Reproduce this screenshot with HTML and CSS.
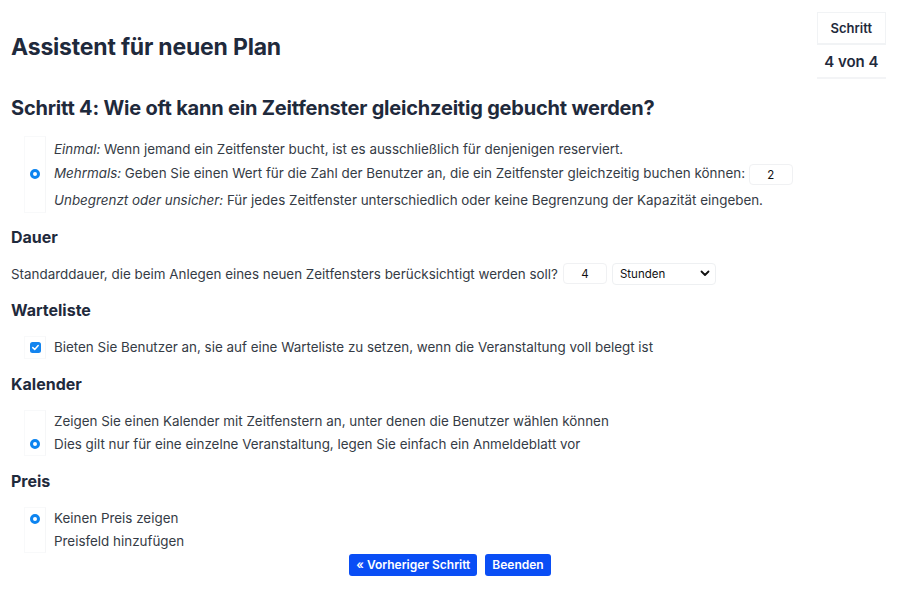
FILE: index.html
```html
<!DOCTYPE html>
<html lang="de">
<head>
<meta charset="utf-8">
<title>Assistent für neuen Plan</title>
<link rel="stylesheet" href="styles.css">
</head>
<body>
<div class="page">
  <header class="top">
    <h1 class="title">Assistent für neuen Plan</h1>
    <table class="stepbox">
      <tr><th>Schritt</th></tr>
      <tr><td>4 von 4</td></tr>
    </table>
  </header>
  <h2 class="step">Schritt 4: Wie oft kann ein Zeitfenster gleichzeitig gebucht werden?</h2>

  <div class="opts first">
    <div class="opt tall"><span class="mark"><span class="radio"></span></span><span class="lbl"><em>Einmal:</em> Wenn jemand ein Zeitfenster bucht, ist es ausschließlich für denjenigen reserviert.</span></div>
    <div class="opt tall"><span class="mark"><span class="radio on"></span></span><span class="lbl"><em>Mehrmals:</em> Geben Sie einen Wert für die Zahl der Benutzer an, die ein Zeitfenster gleichzeitig buchen können: <span class="num">2</span></span></div>
    <div class="opt tall"><span class="mark"><span class="radio"></span></span><span class="lbl"><em>Unbegrenzt oder unsicher:</em> Für jedes Zeitfenster unterschiedlich oder keine Begrenzung der Kapazität eingeben.</span></div>
  </div>

  <h3 class="sec">Dauer</h3>
  <p class="line">Standarddauer, die beim Anlegen eines neuen Zeitfensters berücksichtigt werden soll? <span class="num">4</span> <span class="select">Stunden<svg width="10" height="7" viewBox="0 0 10 7"><path d="M1.5 1.5 L5 5 L8.5 1.5" fill="none" stroke="#111" stroke-width="1.8" stroke-linecap="round" stroke-linejoin="round"/></svg></span></p>

  <h3 class="sec">Warteliste</h3>
  <div class="opts">
    <div class="opt"><span class="mark"><span class="check"><svg width="9" height="9" viewBox="0 0 9 9"><path d="M1.8 4.6 L3.7 6.4 L7.2 2.6" fill="none" stroke="#fff" stroke-width="1.5" stroke-linecap="round" stroke-linejoin="round"/></svg></span></span><span class="lbl">Bieten Sie Benutzer an, sie auf eine Warteliste zu setzen, wenn die Veranstaltung voll belegt ist</span></div>
  </div>

  <h3 class="sec">Kalender</h3>
  <div class="opts">
    <div class="opt"><span class="mark"><span class="radio"></span></span><span class="lbl">Zeigen Sie einen Kalender mit Zeitfenstern an, unter denen die Benutzer wählen können</span></div>
    <div class="opt"><span class="mark"><span class="radio on"></span></span><span class="lbl">Dies gilt nur für eine einzelne Veranstaltung, legen Sie einfach ein Anmeldeblatt vor</span></div>
  </div>

  <h3 class="sec">Preis</h3>
  <div class="opts last">
    <div class="opt"><span class="mark"><span class="radio on"></span></span><span class="lbl">Keinen Preis zeigen</span></div>
    <div class="opt"><span class="mark"><span class="radio"></span></span><span class="lbl">Preisfeld hinzufügen</span></div>
  </div>

  <div class="actions">
    <button class="btn">« Vorheriger Schritt</button>
    <button class="btn">Beenden</button>
  </div>
</div>
</body>
</html>
```

FILE: styles.css
```css
html, body {
  margin: 0;
  padding: 0;
  background: #fff;
}
body {
  font-family: Inter, "Noto Sans", sans-serif;
  color: #353b45;
  font-size: 13.4px;
}
.page {
  padding: 0 11px;
}
.top {
  display: flex;
  justify-content: space-between;
  align-items: flex-start;
  height: 78px;
}
.title {
  margin: 33px 0 0;
  font-size: 23px;
  line-height: 28px;
  font-weight: 700;
  color: #1f2a3c;
  letter-spacing: -0.2px;
}
.stepbox {
  margin: 12px 3px 0 0;
  border-collapse: collapse;
  color: #1f2a3c;
}
.stepbox th {
  font-weight: 600;
  font-size: 13px;
  line-height: 16px;
  height: 31px;
  box-sizing: border-box;
  padding: 0 11px;
  border: 1px solid #f1f3f5;
  border-bottom: 2px solid #f1f3f5;
}
.stepbox td {
  font-weight: 600;
  font-size: 15px;
  line-height: 18px;
  height: 34px;
  box-sizing: border-box;
  padding: 2px 7px 0;
  text-align: center;
  border-bottom: 2px solid #f3f4f6;
}
.step {
  margin: 18px 0 0;
  font-size: 20px;
  line-height: 24px;
  font-weight: 700;
  color: #1f2a3c;
  letter-spacing: -0.2px;
}
.sec {
  margin: 0;
  font-size: 16px;
  line-height: 19px;
  font-weight: 700;
  color: #1f2a3c;
}
.opts {
  margin: 16px 0 16px 13px;
  display: flex;
  flex-direction: column;
}
.opts.first {
  margin-bottom: 15px;
}
.opts.last {
  margin-bottom: 1px;
}
.opt {
  display: flex;
  align-items: center;
  height: 23px;
}
.opt.tall {
  height: 25.5px;
}
.mark {
  width: 20px;
  align-self: stretch;
  display: flex;
  align-items: center;
  justify-content: center;
  border-left: 1px solid #f8f9fa;
  border-right: 1px solid #f5f6f7;
  margin-right: 8px;
}
.opts .opt:first-child .mark { border-top: 1px solid #f8f9fa; }
.opts .opt:last-child .mark { border-bottom: 1px solid #f8f9fa; }
.radio {
  width: 10px;
  height: 10px;
  border-radius: 50%;
  box-sizing: border-box;
  background: #fff;
}
.radio.on {
  border: 3px solid #0d84f0;
}
.check {
  width: 11px;
  height: 11px;
  border-radius: 2.5px;
  background: #1384ef;
  display: flex;
  align-items: center;
  justify-content: center;
}
.lbl em {
  font-style: italic;
}
.num {
  display: inline-block;
  width: 44px;
  height: 21px;
  line-height: 21px;
  box-sizing: border-box;
  border: 1px solid #f0f1f3;
  border-radius: 4px;
  text-align: center;
  font-size: 11.5px;
  color: #111;
  vertical-align: middle;
}
.line {
  margin: 16px 0 16px;
  height: 22px;
  display: flex;
  align-items: center;
  gap: 5px;
}
.select {
  display: inline-flex;
  align-items: center;
  justify-content: space-between;
  width: 104px;
  height: 22px;
  box-sizing: border-box;
  padding: 0 5px 0 7px;
  border: 1px solid #eef0f2;
  border-radius: 4px;
  font-size: 11.5px;
  color: #111;
}
.actions {
  display: flex;
  justify-content: center;
  gap: 8px;
}
.btn {
  font-family: Inter, "Noto Sans", sans-serif;
  font-size: 12px;
  font-weight: 600;
  color: #fff;
  background: #0a4ef5;
  border: none;
  border-radius: 3px;
  height: 22px;
  padding: 0 7px;
}
```
